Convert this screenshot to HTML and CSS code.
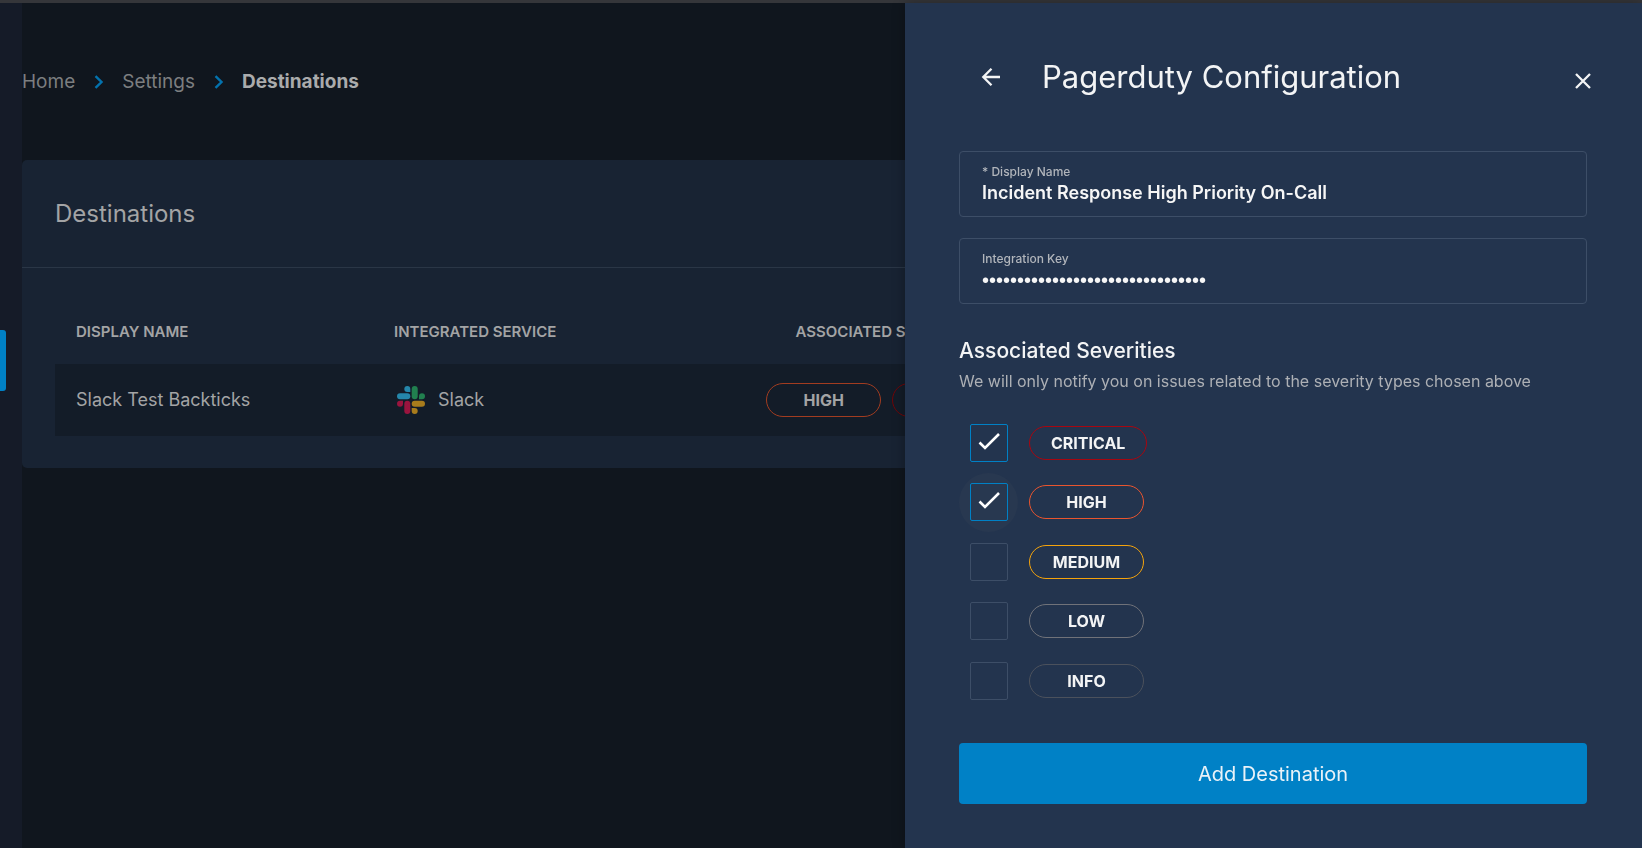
FILE: index.html
```html
<!DOCTYPE html>
<html lang="en">
<head>
<meta charset="utf-8">
<title>Destinations</title>
<link rel="stylesheet" href="styles.css">
</head>
<body>
<div class="app">
  <aside class="sidebar"><span class="sidebar-marker"></span></aside>
  <main class="content">
    <nav class="breadcrumbs" aria-label="Breadcrumb">
      <a href="#home">Home</a>
      <svg class="chevron" viewBox="0 0 10 14" aria-hidden="true"><path d="M1.500 1.200 7.500 7l-6 5.800"/></svg>
      <a href="#settings">Settings</a>
      <svg class="chevron" viewBox="0 0 10 14" aria-hidden="true"><path d="M1.500 1.200 7.500 7l-6 5.800"/></svg>
      <a class="current" href="#destinations" aria-current="page">Destinations</a>
    </nav>
    <section class="card">
      <header class="card-header"><h2>Destinations</h2></header>
      <div class="card-body">
        <table class="table">
          <colgroup><col class="col-name"><col class="col-service"><col class="col-severity"><col></colgroup>
          <thead>
            <tr><th>DISPLAY NAME</th><th>INTEGRATED SERVICE</th><th class="centered">ASSOCIATED SEVERITIES</th><th></th></tr>
          </thead>
          <tbody>
            <tr>
              <td>Slack Test Backticks</td>
              <td>
                <div class="service">
                  <svg class="slack" viewBox="0 0 28 28" aria-hidden="true">
                    <g fill="#2587ab"><path d="M10.300 0a3 3 0 0 0 0 6h3V3a3 3 0 0 0-3-3z"/><rect x="0" y="7.300" width="13.300" height="6" rx="3"/></g>
                    <g fill="#21804f"><rect x="14.700" y="0" width="6" height="13.300" rx="3"/><path d="M28 10.300a3 3 0 0 0-6 0v3h3a3 3 0 0 0 3-3z"/></g>
                    <g fill="#a87c1c"><rect x="14.700" y="14.700" width="13.300" height="6" rx="3"/><path d="M17.700 28a3 3 0 0 0 0-6h-3v3a3 3 0 0 0 3 3z"/></g>
                    <g fill="#9a143e"><rect x="7.300" y="14.700" width="6" height="13.300" rx="3"/><path d="M0 17.700a3 3 0 0 0 6 0v-3H3a3 3 0 0 0-3 3z"/></g>
                  </svg>
                  <span>Slack</span>
                </div>
              </td>
              <td>
                <div class="badges">
                  <span class="badge dim-high">HIGH</span>
                  <span class="badge dim-critical">CRITICAL</span>
                </div>
              </td>
              <td></td>
            </tr>
          </tbody>
        </table>
      </div>
    </section>
  </main>
</div>

<div class="drawer" role="dialog" aria-labelledby="drawer-title">
  <header class="drawer-header">
    <button class="icon-button back" type="button" aria-label="Back">
      <svg viewBox="0 0 24 24"><path d="M21 12H4.500M12.500 3.800 4.300 12l8.200 8.200"/></svg>
    </button>
    <h1 id="drawer-title">Pagerduty Configuration</h1>
    <button class="icon-button close" type="button" aria-label="Close">
      <svg viewBox="0 0 24 24"><path d="M5 5l14 14M19 5l-14 14"/></svg>
    </button>
  </header>
  <form class="form">
    <div class="field">
      <label for="display-name">* Display Name</label>
      <input id="display-name" type="text" value="Incident Response High Priority On-Call">
    </div>
    <div class="field">
      <label for="integration-key">Integration Key</label>
      <input id="integration-key" class="secret" type="password" value="0123456789abcdef0123456789abcdef">
    </div>
    <h3>Associated Severities</h3>
    <p class="hint">We will only notify you on issues related to the severity types chosen above</p>
    <div class="severities">
      <label class="severity"><span class="tick"><input type="checkbox" checked><svg viewBox="0 0 26 26" aria-hidden="true"><path d="M3.500 12.500 9 18 23 4"/></svg></span><span class="badge critical">CRITICAL</span></label>
      <label class="severity"><span class="tick hovered"><input type="checkbox" checked><svg viewBox="0 0 26 26" aria-hidden="true"><path d="M3.500 12.500 9 18 23 4"/></svg></span><span class="badge high">HIGH</span></label>
      <label class="severity"><span class="tick"><input type="checkbox"></span><span class="badge medium">MEDIUM</span></label>
      <label class="severity"><span class="tick"><input type="checkbox"></span><span class="badge low">LOW</span></label>
      <label class="severity"><span class="tick"><input type="checkbox"></span><span class="badge info">INFO</span></label>
    </div>
    <button class="submit" type="button">Add Destination</button>
  </form>
</div>
</body>
</html>
```
FILE: styles.css
```css
* { box-sizing: border-box; }

body {
  margin: 0;
  background: #10161e;
  color: #a3a4a5;
  font-family: Inter, "Liberation Sans", sans-serif;
  font-size: 18px;
  line-height: 24px;
  overflow: hidden;
}

h1, h2, h3, p { margin: 0; font-weight: 400; }

.app {
  display: flex;
  min-height: 100vh;
  border-top: 3px solid #35363a;
}

.sidebar {
  flex: none;
  width: 22px;
  padding-top: 327px;
  background: #151b28;
}

.sidebar-marker {
  display: block;
  width: 6px;
  height: 61px;
  border-radius: 0 3px 3px 0;
  background: #0081c6;
}

.content { flex: 1; min-width: 0; padding: 67px 22px 0 0; }

.breadcrumbs {
  display: flex;
  align-items: center;
  margin-bottom: 66px;
  font-size: 19px;
}

.breadcrumbs a { color: #7c7e80; text-decoration: none; }
.breadcrumbs .current { color: #aaabac; font-weight: 700; }

.chevron {
  width: 10px;
  height: 14px;
  margin: 0 18px 0 19px;
  fill: none;
  stroke: #0372ad;
  stroke-width: 2.4;
}

.card { background: #182333; border-radius: 5px; }

.card-header {
  padding: 37px 33px;
  border-bottom: 1px solid #2a3646;
}

.card-header h2 { font-size: 24px; line-height: 33px; }

.card-body { padding: 32px 33px; }

.table {
  width: 100%;
  table-layout: fixed;
  border-collapse: collapse;
}

.col-name { width: 318px; }
.col-service { width: 324px; }
.col-severity { width: 383px; }

.table th {
  height: 64px;
  padding: 0 21px;
  font-size: 15px;
  font-weight: 600;
  text-align: left;
}

.table .centered { text-align: center; }

.table td { height: 72px; padding: 0 21px; background: #131c28; }

.service { display: flex; align-items: center; gap: 13px; }

.slack { width: 28px; height: 28px; margin-left: 3px; }

.badges { display: flex; justify-content: center; gap: 11px; }

.badge {
  display: flex;
  align-items: center;
  justify-content: center;
  min-width: 115px;
  height: 34px;
  padding: 0 21px;
  border: 1px solid;
  border-radius: 17px;
  font-size: 16px;
  font-weight: 700;
}

.dim-high { border-color: #a23c20; }
.dim-critical { border-color: #6f0508; }

.drawer {
  position: fixed;
  top: 3px;
  right: 0;
  bottom: 0;
  width: 737px;
  padding: 49px 55px 44px 54px;
  background: #23344e;
  color: #f3f4f5;
  box-shadow: 0 0 12px rgba(0, 0, 0, 0.3);
}

.drawer-header {
  display: flex;
  align-items: center;
  margin-bottom: 49px;
}

.drawer-header h1 {
  flex: 1;
  font-size: 31px;
  line-height: 50px;
}

.icon-button {
  display: flex;
  padding: 0;
  border: 0;
  background: none;
  color: inherit;
}

.icon-button svg {
  width: 24px;
  height: 24px;
  fill: none;
  stroke: currentColor;
  stroke-width: 2.3;
}

.back { margin: 0 39px 0 20px; }
.close { margin: 8px -8px 0 0; }

.form { display: flex; flex-direction: column; }

.field {
  display: flex;
  flex-direction: column;
  height: 66px;
  margin-bottom: 21px;
  padding: 11px 22px;
  border: 1px solid #3d4e67;
  border-radius: 4px;
}

.field label {
  color: #b1b5bb;
  font-size: 12px;
  font-weight: 500;
  line-height: 17px;
}

.field input {
  width: 100%;
  height: 26px;
  padding: 0;
  border: 0;
  outline: 0;
  background: none;
  color: #f6f6f6;
  font: 600 18px/26px Inter, "Liberation Sans", sans-serif;
}

.field .secret { font: 400 20px/26px "Liberation Sans", sans-serif; }

.form h3 {
  margin-top: 11px;
  font-size: 21px;
  font-weight: 500;
  line-height: 30px;
}

.hint {
  margin: 3px 0 20px;
  color: #adb0b5;
  font-size: 16px;
}

.severities {
  display: flex;
  flex-direction: column;
  justify-content: space-between;
  height: 297px;
  margin-bottom: 33px;
}

.severity { display: flex; align-items: center; gap: 11px; height: 59px; }

.tick {
  display: grid;
  place-items: center;
  width: 59px;
  height: 59px;
  border-radius: 50%;
}

.hovered { background: #283850; }

.tick input, .tick svg { grid-area: 1 / 1; }

.tick input {
  appearance: none;
  width: 38px;
  height: 38px;
  margin: 0;
  border: 1px solid #3d4e67;
  border-radius: 2px;
}

.tick input:checked { border-color: #0081c6; }

.tick svg {
  width: 26px;
  height: 26px;
  fill: none;
  stroke: #fff;
  stroke-width: 2.6;
  pointer-events: none;
}

.critical { border-color: #a80610; }
.high { border-color: #e9552e; }
.medium { border-color: #f5a30c; }
.low { border-color: #707279; }
.info { border-color: #4b515c; }

.submit {
  height: 61px;
  border: 0;
  border-radius: 4px;
  background: #0081c6;
  color: #e9f2f8;
  font: 400 20px/24px Inter, "Liberation Sans", sans-serif;
}
```
